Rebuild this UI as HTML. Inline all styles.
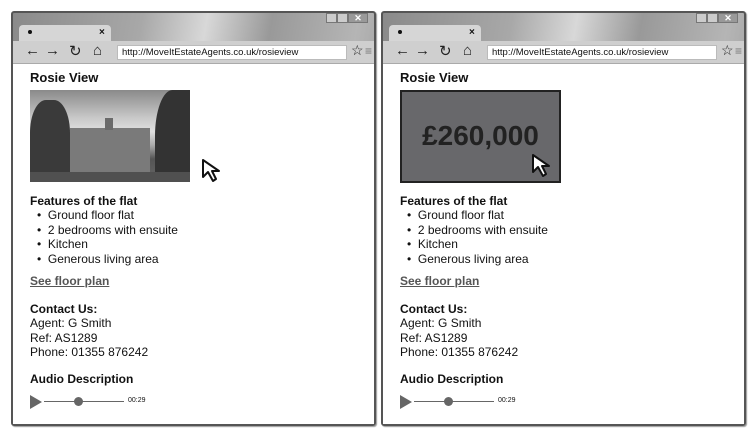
<!DOCTYPE html>
<html><head><style>
*{margin:0;padding:0;box-sizing:border-box}
body{width:756px;height:438px;background:#fff;position:relative;overflow:hidden;font-family:"Liberation Sans",sans-serif;color:#111}
.win{position:absolute;top:11px;width:365px;height:415px;border:2px solid #555;border-radius:3px;background:linear-gradient(100deg,#8a8a8a 0%,#a8a8a8 30%,#d8d8d8 45%,#999 60%,#b5b5b5 80%,#8d8d8d 100%);box-shadow:1px 1px 1px #999}
.ctrl{position:absolute;top:0;right:6px;height:11px;display:flex}
.ctrl div{width:11px;height:10px;background:#ccc;border:1px solid #777;margin-left:0}
.ctrl .x{width:20px;background:#999;color:#fff;font-size:9px;font-weight:bold;text-align:center;line-height:9px}
.tab{position:absolute;left:6px;top:12px;width:92px;height:16px;background:#d6d6d6;border-radius:4px 4px 0 0;font-size:9px}
.tab .d{position:absolute;left:9px;top:5px;width:4px;height:4px;background:#111;border-radius:50%}
.tab .c{position:absolute;left:80px;top:2px;font-size:10px;font-weight:bold}
.bar{position:absolute;left:0;right:0;top:28px;height:22px;background:#cfcfcf}
.url{position:absolute;left:104px;top:4px;width:230px;height:15px;background:#fff;border:1px solid #bbb;font-size:9.5px;line-height:13px;padding-left:4px;color:#111}
.nav{position:absolute;top:1px;font-size:15px;color:#222}
.content{position:absolute;left:0;right:0;top:50px;bottom:0;background:#fff;border-top:1px solid #aaa}
.t{position:absolute;left:17px;font-size:12px;white-space:nowrap}
.b{font-weight:bold}
</style></head><body>

<!-- window template -->
<div class="win" style="left:11px">
 <div class="ctrl"><div></div><div></div><div class="x">✕</div></div>
 <div class="tab"><div class="d"></div><div class="c">×</div></div>
 <div class="bar">
  <div class="nav" style="left:12px">←</div><div class="nav" style="left:32px">→</div><div class="nav" style="left:56px">↻</div><div class="nav" style="left:80px">⌂</div>
  <div class="url">http://MoveItEstateAgents.co.uk/rosieview</div>
  <div class="nav" style="left:338px;font-size:14px">☆</div><div class="nav" style="left:352px;font-size:12px;top:3px;color:#777">≡</div>
 </div>
 <div class="content">
  <div class="t b" style="top:6px;font-size:13px">Rosie View</div>
  <div style="position:absolute;left:17px;top:26px;width:160px;height:92px;background:linear-gradient(#8a8a8a,#c8c8c8 30%,#e0e0e0 45%,#aaa 60%,#555 75%,#666 100%);overflow:hidden">
   <div style="position:absolute;left:0;top:10px;width:40px;height:82px;background:#3a3a3a;border-radius:40% 40% 0 0"></div>
   <div style="position:absolute;right:0;top:0;width:35px;height:92px;background:#333;border-radius:50% 0 0 0"></div>
   <div style="position:absolute;left:40px;top:38px;width:80px;height:50px;background:#7a7a7a"></div>
   <div style="position:absolute;left:75px;top:28px;width:8px;height:12px;background:#6a6a6a"></div>
   <div style="position:absolute;left:0;top:82px;width:160px;height:10px;background:#505050"></div>
  </div>
  <svg style="position:absolute;left:188px;top:94px" width="26" height="26" viewBox="0 0 26 26"><path d="M2 2 L2 19 L7 14 L12 23 L15 21 L11 13 L18 13 Z" fill="#fff" stroke="#111" stroke-width="2" stroke-linejoin="round"/></svg>
  <div class="t b" style="top:130px">Features of the flat</div>
  <div class="t" style="top:144px;left:24px">• &nbsp;Ground floor flat</div>
  <div class="t" style="top:159px;left:24px">• &nbsp;2 bedrooms with ensuite</div>
  <div class="t" style="top:173px;left:24px">• &nbsp;Kitchen</div>
  <div class="t" style="top:188px;left:24px">• &nbsp;Generous living area</div>
  <div class="t b" style="top:210px;color:#555;text-decoration:underline">See floor plan</div>
  <div class="t b" style="top:238px">Contact Us:</div>
  <div class="t" style="top:252px">Agent: G Smith</div>
  <div class="t" style="top:267px">Ref: AS1289</div>
  <div class="t" style="top:281px">Phone: 01355 876242</div>
  <div class="t b" style="top:308px">Audio Description</div>
  <div style="position:absolute;left:17px;top:331px;width:0;height:0;border-left:12px solid #666;border-top:7px solid transparent;border-bottom:7px solid transparent"></div>
  <div style="position:absolute;left:31px;top:337px;width:80px;height:1px;background:#666"></div>
  <div style="position:absolute;left:61px;top:333px;width:9px;height:9px;border-radius:50%;background:#666"></div>
  <div style="position:absolute;left:115px;top:333px;font-size:7px">00:29</div>
 </div>
</div>

<div class="win" style="left:381px">
 <div class="ctrl"><div></div><div></div><div class="x">✕</div></div>
 <div class="tab"><div class="d"></div><div class="c">×</div></div>
 <div class="bar">
  <div class="nav" style="left:12px">←</div><div class="nav" style="left:32px">→</div><div class="nav" style="left:56px">↻</div><div class="nav" style="left:80px">⌂</div>
  <div class="url">http://MoveItEstateAgents.co.uk/rosieview</div>
  <div class="nav" style="left:338px;font-size:14px">☆</div><div class="nav" style="left:352px;font-size:12px;top:3px;color:#777">≡</div>
 </div>
 <div class="content">
  <div class="t b" style="top:6px;font-size:13px">Rosie View</div>
  <div style="position:absolute;left:17px;top:26px;width:161px;height:93px;background:#68686b;border:2px solid #222;font-size:28px;font-weight:bold;color:#222;text-align:center;line-height:87px">£260,000</div>
  <svg style="position:absolute;left:148px;top:89px" width="26" height="26" viewBox="0 0 26 26"><path d="M2 2 L2 19 L7 14 L12 23 L15 21 L11 13 L18 13 Z" fill="#fff" stroke="#111" stroke-width="2" stroke-linejoin="round"/></svg>
  <div class="t b" style="top:130px">Features of the flat</div>
  <div class="t" style="top:144px;left:24px">• &nbsp;Ground floor flat</div>
  <div class="t" style="top:159px;left:24px">• &nbsp;2 bedrooms with ensuite</div>
  <div class="t" style="top:173px;left:24px">• &nbsp;Kitchen</div>
  <div class="t" style="top:188px;left:24px">• &nbsp;Generous living area</div>
  <div class="t b" style="top:210px;color:#555;text-decoration:underline">See floor plan</div>
  <div class="t b" style="top:238px">Contact Us:</div>
  <div class="t" style="top:252px">Agent: G Smith</div>
  <div class="t" style="top:267px">Ref: AS1289</div>
  <div class="t" style="top:281px">Phone: 01355 876242</div>
  <div class="t b" style="top:308px">Audio Description</div>
  <div style="position:absolute;left:17px;top:331px;width:0;height:0;border-left:12px solid #666;border-top:7px solid transparent;border-bottom:7px solid transparent"></div>
  <div style="position:absolute;left:31px;top:337px;width:80px;height:1px;background:#666"></div>
  <div style="position:absolute;left:61px;top:333px;width:9px;height:9px;border-radius:50%;background:#666"></div>
  <div style="position:absolute;left:115px;top:333px;font-size:7px">00:29</div>
 </div>
</div>
</body></html>
